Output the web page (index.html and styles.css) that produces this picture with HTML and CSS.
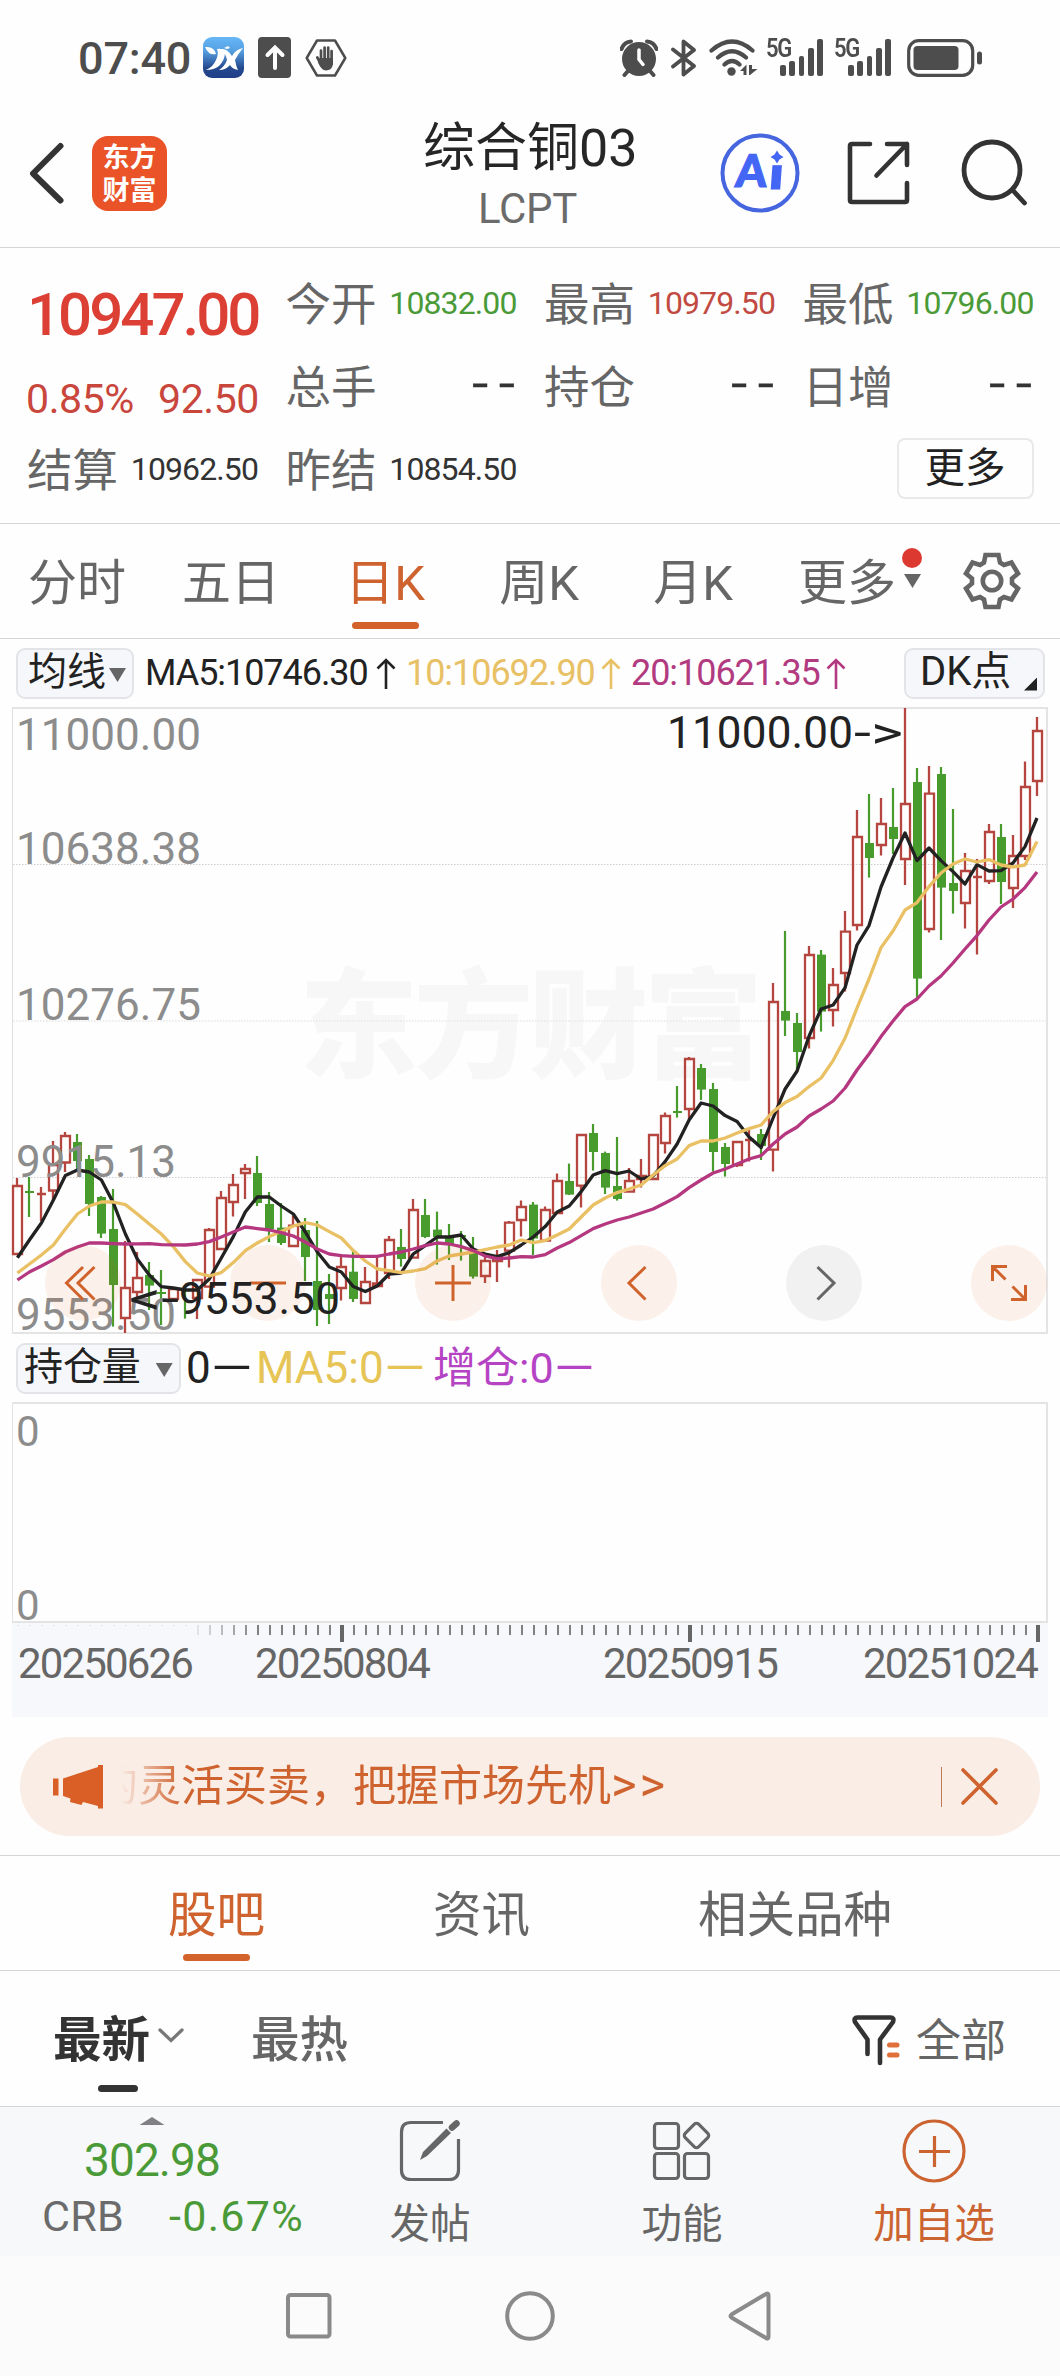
FILE: index.html
```html
<!DOCTYPE html>
<html lang="zh-CN">
<head>
<meta charset="utf-8">
<title>综合铜03 LCPT</title>
<link rel="stylesheet" href="styles.css">
</head>
<body>
<div class="status">
  <span class="clock">07:40</span>
  <svg class="st-app" width="41" height="41" viewBox="0 0 41 41">
    <defs><linearGradient id="sky" x1="0" y1="0" x2="0" y2="1"><stop offset="0" stop-color="#67b7f7"/><stop offset=".35" stop-color="#559fe0"/><stop offset=".75" stop-color="#25498f"/><stop offset="1" stop-color="#203f86"/></linearGradient></defs>
    <rect width="41" height="41" rx="9" fill="url(#sky)"/>
    <path d="M2 10q9-1 11 7q-7 2-11-7zM14 12q5-1 8 3q0 8-6 14q-5 4-13 4q7-3 10-10q3-6 1-11zM18 12q6-1 11 7q4-7 11-8q-5 6-8 12q1 6 3 10q-6-1-8-5q-4 5-11 5q6-4 8-10q-1-6-6-11zM21 11l4-2l2 2l-3 1z" fill="#fff"/>
  </svg>
  <svg class="st-up" width="33" height="41" viewBox="0 0 33 41">
    <rect width="33" height="41" rx="4" fill="#4d4d4d"/>
    <path d="M17 31V11M9.500 18L17 10.500L24.500 18" fill="none" stroke="#fff" stroke-width="4" stroke-linecap="round"/>
  </svg>
  <svg class="st-hand" width="42" height="38" viewBox="0 0 42 38">
    <path d="M12 1.500H30L40.300 19L30 36.500H12L1.700 19z" fill="none" stroke="#4d4d4d" stroke-width="2.500" stroke-linejoin="round"/>
    <path d="M16 25V11.500M19.600 22V8.500M23.200 22V8.500M26.600 25V12M12.300 18.500L17 27" stroke="#4d4d4d" stroke-width="2.700" stroke-linecap="round"/>
    <path d="M14.700 19H28V25q-1 6.500-7 6.500q-4.500 0-8-8z" fill="#4d4d4d"/>
  </svg>
  <div class="status-right">
    <svg width="38" height="38" viewBox="0 0 38 38" class="g-alarm">
      <circle cx="19" cy="20" r="17" fill="#4d4d4d"/>
      <path d="M1.500 10Q4 3 11 2.500M36.500 10Q34 3 27 2.500M8 32L4.500 36M30 32L33.500 36" stroke="#4d4d4d" stroke-width="4" fill="none" stroke-linecap="round"/>
      <path d="M19 11V20.500L23 25.500" stroke="#fff" stroke-width="3.500" fill="none" stroke-linecap="round"/>
    </svg>
    <svg width="26" height="38" viewBox="0 0 26 38" class="g-bt">
      <path d="M2 10.500L23 27L12.500 35.500V2.500L23 11L2 27.500" fill="none" stroke="#4d4d4d" stroke-width="3.800" stroke-linejoin="round" stroke-linecap="round"/>
    </svg>
    <svg width="49" height="38" viewBox="0 0 49 38" class="g-wifi">
      <path d="M2.500 11.500Q23 -6.500 43.500 11.500M9 18.500Q23 6 37 18.500M15.500 25.500Q23 18.500 30.500 25.500" fill="none" stroke="#4d4d4d" stroke-width="4.200" stroke-linecap="round"/>
      <circle cx="22.500" cy="32.500" r="4.200" fill="#4d4d4d"/>
      <path d="M31 32L37.500 25.500V36H34.500V32zM40 26H43V30H48.500L41 36H40z" fill="#4d4d4d"/>
    </svg>
    <div class="sig"><b>5G</b><i class="b1"></i><i class="b2"></i><i class="b3"></i><i class="b4"></i><i class="b5"></i></div>
    <div class="sig"><b>5G</b><i class="b1"></i><i class="b2"></i><i class="b3"></i><i class="b4"></i><i class="b5"></i></div>
    <svg width="76" height="38" viewBox="0 0 76 38" class="g-bat">
      <rect x="1.700" y="1.700" width="64" height="34.600" rx="10" fill="none" stroke="#4d4d4d" stroke-width="3.200"/>
      <rect x="6.500" y="7" width="45" height="24" rx="4" fill="#4d4d4d"/>
      <rect x="70" y="12.500" width="5" height="13" rx="2.500" fill="#4d4d4d"/>
    </svg>
  </div>
</div>

<header class="top">
  <div class="top-left">
    <svg width="36" height="62" viewBox="0 0 36 62"><path d="M31.500 4L4 31.500L31.500 58.500" fill="none" stroke="#333" stroke-width="6" stroke-linecap="round" stroke-linejoin="round"/></svg>
    <div class="logo"><span>东方</span><span>财富</span></div>
  </div>
  <div class="title"><div class="name">综合铜03</div><div class="code">LCPT</div></div>
  <div class="top-right">
    <svg width="80" height="80" viewBox="0 0 80 80">
      <circle cx="40" cy="40" r="37.500" fill="none" stroke="#4666e0" stroke-width="4"/>
      <text class="ai" x="15.500" y="54" textLength="31" lengthAdjust="spacingAndGlyphs" transform="skewX(-4) translate(3 0)">A</text>
      <text class="ai" x="48" y="56.500" textLength="15" lengthAdjust="spacingAndGlyphs" transform="skewX(-4) translate(4 0)">ı</text>
      <path d="M57 17.500L59.500 21.500L63.500 24L59.500 26.500L57 30.500L54.500 26.500L50.500 24L54.500 21.500z" fill="#4466f5"/>
    </svg>
    <svg class="i-share" width="66" height="66" viewBox="0 0 66 66" fill="none" stroke="#333" stroke-width="4.600" stroke-linecap="round" stroke-linejoin="round"><path d="M24 4H6Q4 4 4 6V60Q4 62 6 62H59Q61 62 61 60V43M41 4H61V25M61 4L30.500 35.500"/></svg>
    <svg class="i-search" width="68" height="68" viewBox="0 0 68 68" fill="none" stroke="#333" stroke-width="4.800" stroke-linecap="round"><circle cx="32" cy="31" r="28"/><path d="M53 51.500L64.500 64"/></svg>
  </div>
</header>

<section class="quote">
  <div class="price">10947.00</div>
  <div class="cell"><span>今开</span><em class="dn">10832.00</em></div>
  <div class="cell"><span>最高</span><em class="up">10979.50</em></div>
  <div class="cell"><span>最低</span><em class="dn">10796.00</em></div>
  <div class="change"><span>0.85%</span><span>92.50</span></div>
  <div class="cell"><span>总手</span><em class="none">--</em></div>
  <div class="cell"><span>持仓</span><em class="none">--</em></div>
  <div class="cell"><span>日增</span><em class="none">--</em></div>
  <div class="cell"><span>结算</span><em>10962.50</em></div>
  <div class="cell"><span>昨结</span><em>10854.50</em></div>
  <div class="more"><button>更多</button></div>
</section>

<nav class="periods">
  <a>分时</a><a>五日</a><a class="on">日K</a><a>周K</a><a>月K</a><a class="morep">更多<i class="dot"></i><i class="tri"></i></a>
  <svg width="60" height="60" viewBox="-30 -30 60 60" fill="none" stroke="#666" stroke-width="4.600">
    <circle r="9.200"/>
    <path d="M-6.500 -26H6.500L8 -18.500L12 -16L19.500 -18.500L26 -7.500L20 -2.500V2.500L26 7.500L19.500 18.500L12 16L8 18.500L6.500 26H-6.500L-8 18.500L-12 16L-19.500 18.500L-26 7.500L-20 2.500V-2.500L-26 -7.500L-19.500 -18.500L-12 -16L-8 -18.500z"/>
  </svg>
</nav>

<div class="ma">
  <button class="pill pill-ma">均线<i class="tri"></i></button>
  <span class="m5">MA5:10746.30</span><svg class="arr m5"><use href="#arrow"/></svg>
  <span class="m10">10:10692.90</span><svg class="arr m10"><use href="#arrow"/></svg>
  <span class="m20">20:10621.35</span><svg class="arr m20"><use href="#arrow"/></svg>
  <button class="pill pill-dk">DK点<i class="corner"></i></button>
  <svg width="0" height="0" class="defs"><symbol id="arrow" viewBox="0 0 20 31"><path d="M10 31V1.500M1.500 10.500L10 2L18.500 10.500" fill="none" stroke="currentColor" stroke-width="2.600"/></symbol></svg>
</div>

<svg id="kline" class="kline" width="1060" height="628" viewBox="0 707 1060 628">
  <text class="wm" x="299" y="1069" textLength="464">东方财富</text>
  <g id="grid"></g>
  <g id="candles"></g>
  <g id="lines" fill="none" stroke-width="3.300" stroke-linejoin="round"></g>
  <g class="axis">
    <text x="16" y="750" textLength="185">11000.00</text>
    <text x="16" y="864" textLength="185">10638.38</text>
    <text x="16" y="1020" textLength="185">10276.75</text>
    <text x="16" y="1177" textLength="160">9915.13</text>
    <text x="16" y="1329.500" textLength="160">9553.50</text>
  </g>
  <g class="btns" fill="none" stroke="#d0622c" stroke-width="3">
    <g fill="#dc5f22" fill-opacity=".09" stroke="none"><circle cx="83" cy="1283" r="38"/><circle cx="268" cy="1283" r="38"/><circle cx="453" cy="1283" r="38"/><circle cx="639" cy="1283" r="38"/><circle cx="1009" cy="1283" r="38"/></g>
    <circle cx="824" cy="1283" r="38" fill="#000" fill-opacity=".05" stroke="none"/>
    <path d="M83 1267L66.500 1283L83 1299.500M94.500 1267L78 1283L94.500 1299.500M250 1283H286M435 1283H471M453 1265V1301M645.500 1267L629 1283L645.500 1299.500"/>
    <path d="M817.500 1267L834 1283L817.500 1299.500" stroke="#666"/>
    <path d="M1007 1266.500H992.500V1281M993 1267L1005.500 1279.500M1011 1299.500H1025.500V1285M1025 1299L1012.500 1286.500"/>
  </g>
  <g class="note">
    <text x="667" y="748" textLength="186">11000.00</text>
    <text x="854" y="748" textLength="49" lengthAdjust="spacingAndGlyphs">-&gt;</text>
    <text x="129" y="1313.500" textLength="50" lengthAdjust="spacingAndGlyphs">&lt;-</text>
    <text x="179" y="1313.500" textLength="161">9553.50</text>
  </g>
</svg>

<div class="volhead">
  <button class="pill pill-vol">持仓量<i class="tri"></i></button>
  <span class="v0">0<i>—</i></span><span class="v1">MA5:0<i>—</i></span><span class="v2">增仓:0<i>—</i></span>
</div>
<div class="volbox"><span>0</span><span>0</span></div>
<div class="dates">
  <svg id="ticks" width="1036" height="20" viewBox="12 1622 1036 20"></svg>
  <div class="dates-row"><span>20250626</span><span>20250804</span><span>20250915</span><span>20251024</span></div>
</div>

<div class="banner">
  <svg width="52" height="46" viewBox="0 0 52 46"><path d="M0 14.500H5.500V31.500H0zM10 14.500L45 3V1H50V44.500H45V42L30 38L28.500 41L17 38L17.500 34.500L10 32z" fill="#d95f26"/></svg>
  <div class="marquee"><span>的灵活买卖，把握市场先机<i>&gt;&gt;</i></span></div>
  <div class="banner-end"><svg width="37" height="37" viewBox="0 0 37 37"><path d="M2 2L35 35M35 2L2 35" stroke="#cf632f" stroke-width="3.600" stroke-linecap="round"/></svg></div>
</div>

<nav class="tabs"><a class="on">股吧</a><a>资讯</a><a>相关品种</a></nav>

<div class="sort">
  <a class="on">最新<svg width="26" height="16" viewBox="0 0 26 16"><path d="M2 2L13 12.500L24 2" fill="none" stroke="#777" stroke-width="3.300" stroke-linecap="round"/></svg></a>
  <a>最热</a>
  <div class="filter">
    <svg width="48" height="52" viewBox="0 0 48 52" fill="none" stroke="#333" stroke-width="4.600" stroke-linecap="round" stroke-linejoin="round"><path d="M15.500 40V25.500L3 8Q1.500 3.500 5.500 3.500H38.500Q42.500 3.500 41 8L28 25.500V49"/><path d="M37.500 31H45M37.500 41H45" stroke="#e0703a" stroke-width="5"/></svg>
    <span>全部</span>
  </div>
</div>

<footer class="bar">
  <div class="index"><i class="uptri"></i><b>302.98</b><p><span>CRB</span><em>-0.67%</em></p></div>
  <a><svg width="62" height="62" viewBox="0 0 62 62" fill="none" stroke="#666" stroke-width="3.200"><path d="M44 2.500H12Q2.500 2.500 2.500 12V50Q2.500 59.500 12 59.500H50Q59.500 59.500 59.500 50V19"/><path d="M21 40L24 32L47.500 8.500L52 13L28 36z" fill="#666" stroke="none"/><path d="M53 7.500L57.500 3.500" stroke-width="6.500" stroke-linecap="round"/></svg>发帖</a>
  <a><svg width="62" height="62" viewBox="0 0 62 62" fill="none" stroke="#666" stroke-width="3.200"><rect x="3.500" y="3.500" width="24" height="25" rx="3"/><rect x="3.500" y="33.500" width="24" height="25" rx="3"/><rect x="33.500" y="33.500" width="24" height="25" rx="3"/><rect x="36" y="6" width="19" height="19" rx="3" transform="rotate(45 45.500 15.500)"/></svg>功能</a>
  <a class="add"><svg width="64" height="64" viewBox="0 0 64 64" fill="none" stroke="#cb6431" stroke-width="3.200"><circle cx="32" cy="32" r="30"/><path d="M17 32.500H48M32.500 17V48"/></svg>加自选</a>
</footer>
<div class="sysnav">
  <svg width="46" height="46" viewBox="0 0 46 46"><rect x="2" y="2" width="41.500" height="41.500" rx="2.500"/></svg>
  <svg width="50" height="50" viewBox="0 0 50 50"><circle cx="25" cy="25" r="22.800"/></svg>
  <svg width="44" height="50" viewBox="0 0 44 50"><path d="M40.500 4V46Q40.500 48.500 38 47L3.500 26.500Q1.500 25 3.500 23.500L38 3Q40.500 1.500 40.500 4z"/></svg>
</div>
<script src="chart.js"></script>
</body>
</html>
```

FILE: styles.css
```css
* { box-sizing: border-box; }
body { margin: 0; width: 1060px; background: #fefefe; color: #333; font-family: Roboto, "Noto Sans CJK SC", sans-serif; overflow-x: hidden; }
svg { display: block; flex: none; }
em, i { font-style: normal; }
p { margin: 0; }
button { font-family: inherit; padding: 0; margin: 0; color: #222; }

.status { height: 99px; padding: 16px 77px 0 78px; display: flex; align-items: center; color: #4d4d4d; }
.clock { font-size: 45px; font-weight: 500; width: 113px; margin-top: 1px; white-space: nowrap; letter-spacing: -.2px; }
.st-app { margin-left: 12px; }
.st-up { margin-left: 14px; }
.st-hand { margin-left: 14px; }
.status-right { margin-left: auto; display: flex; align-items: center; }
.g-bt { margin-left: 13px; }
.g-wifi { margin-left: 12px; margin-right: 9px; }
.sig { width: 56px; height: 37px; margin-right: 12px; display: flex; align-items: flex-end; gap: 3.400px; position: relative; padding-left: 13px; }
.sig b { position: absolute; left: -1px; top: -2px; font-size: 25px; line-height: 24px; font-weight: 600; letter-spacing: -1.500px; transform: scaleX(.88); transform-origin: 0 0; }
.sig i { width: 6px; border-radius: 2px; background: #4d4d4d; }
.sig .b1 { height: 11px; } .sig .b2 { height: 15px; } .sig .b3 { height: 20px; } .sig .b4 { height: 28px; } .sig .b5 { height: 37px; }
.g-bat { margin-left: 4px; }

.top { height: 149px; border-bottom: 1px solid #d6d6d6; display: grid; grid-template-columns: 1fr 214px 1fr; align-items: center; }
.top-left { display: flex; align-items: center; padding-left: 29px; gap: 27px; }
.logo { width: 75px; height: 75px; border-radius: 16px; background: #e95327; color: #fff; font-size: 27px; font-weight: 700; line-height: 33px; padding-top: 6px; display: flex; flex-direction: column; align-items: center; }
.title { text-align: center; white-space: nowrap; color: #262626; }
.name { font-size: 52px; line-height: 64px; margin-top: 10px; }
.code { font-size: 42px; line-height: 60px; margin-top: -2px; margin-left: -5px; color: #6b6b6b; letter-spacing: -.3px; }
.top-right { display: flex; align-items: center; padding-left: 83px; }
.ai { font: 900 45px Lato, sans-serif; fill: #4466f5; stroke: #4466f5; stroke-width: 1.200px; }
.i-share { margin-left: 46px; }
.i-search { margin-left: 48px; }

.quote { height: 276px; border-bottom: 1px solid #d6d6d6; padding: 13px 0 0 27px; display: grid; grid-template-columns: repeat(4, 231px); grid-template-rows: repeat(3, 83px); column-gap: 27.500px; align-items: center; }
.cell { display: flex; justify-content: space-between; align-items: center; white-space: nowrap; }
.cell span { font-size: 45.500px; color: #666; margin-top: -3px; }
.cell em { font-size: 32px; letter-spacing: -.9px; color: #333; }
.cell .up { color: #c14b42; }
.cell .dn { color: #4b9a38; }
.cell .none { font: 42px/50px "Liberation Mono", monospace; letter-spacing: -3px; margin: 0 -2px 0 0; -webkit-text-stroke: .4px #333; transform: scaleX(1.2); transform-origin: 100% 50%; }
.price { font-size: 60px; font-weight: 500; color: #dc4035; letter-spacing: -3px; white-space: nowrap; padding: 24px 0 0; }
.change { font-size: 41px; letter-spacing: -.4px; color: #c9463d; display: flex; justify-content: space-between; padding-top: 26px; margin: 0 -1px; }
.more { grid-column: 4; }
.more button { display: block; margin: -1px 0 0 94px; width: 137px; height: 61px; border: 2px solid #e8e9eb; border-radius: 8px; background: #fefefe; font-size: 40.500px; line-height: 53px; }

.periods { height: 115px; border-bottom: 1px solid #d6d6d6; display: flex; align-items: center; color: #666; }
.periods a { width: 154px; height: 114px; line-height: 119px; text-align: center; font-size: 49px; position: relative; }
.periods a.on { color: #cf632f; }
.periods .on::after, .tabs .on::after { content: ""; position: absolute; width: 67px; height: 7px; border-radius: 4px; background: #d4622b; left: 50%; margin-left: -33px; bottom: 9px; }
.periods svg { margin-left: 38px; margin-top: 0; }
.dot { position: absolute; width: 20px; height: 20px; border-radius: 50%; background: #dc3a31; left: 132px; top: 24px; }
.tri { width: 17px; height: 14px; background: #666; clip-path: polygon(0 0, 100% 0, 50% 100%); }
.morep .tri { position: absolute; left: 134px; top: 50px; }

.ma { height: 68px; display: flex; align-items: center; font-size: 36px; white-space: nowrap; padding: 0 15px 0 16px; }
.ma span { letter-spacing: -1.050px; }
.defs { position: absolute; }
.m5 { color: #222; } .m10 { color: #e8c065; } .m20 { color: #b23a80; }
span.m5 { margin-left: 11px; width: 231px; }
span.m10, span.m20 { width: 195px; margin-left: 10px; }
.arr { width: 20px; height: 31px; }
.pill { flex: none; height: 51px; border: 2px solid #e2e4e8; border-radius: 9px; background: #f6f7fa; display: flex; align-items: center; font-size: 39px; line-height: 44px; white-space: nowrap; }
.pill-ma { width: 118px; padding: 0 0 2px 10px; gap: 3px; }
.pill-ma .tri { margin-top: 6px; }
.pill-dk { width: 141px; margin-left: auto; padding: 0 0 2px 14px; position: relative; font-size: 40px; }
.corner { position: absolute; right: 6px; bottom: 6px; width: 13px; height: 13px; background: #222; clip-path: polygon(100% 0, 100% 100%, 0 100%); }

.wm { font: 900 119px "Noto Sans CJK SC", sans-serif; fill: #f7f7f7; }
.axis text { font-size: 44px; fill: #8c8c8c; }
.note text { font-size: 44px; fill: #222; }

.volhead { height: 67px; display: flex; align-items: center; font-size: 44px; line-height: 60px; padding-left: 16px; white-space: nowrap; }
.volhead span i { display: inline-block; transform: scaleX(1.2); transform-origin: 0 50%; }
.volhead span { height: 60px; margin-top: -2px; }
.pill-vol { width: 165px; padding: 0 0 3px 6px; gap: 15px; letter-spacing: -.1px; }
.pill-vol .tri { margin-top: 6px; }
.volhead .v0 { color: #222; margin-left: 5px; width: 70px; }
.v1 { color: #e6c456; width: 177px; }
.volhead .v2 { color: #b544c4; font-size: 43px; }
.volbox { height: 221px; margin: 0 12px; border: 2px solid #e4e4e4; border-left-width: 1px; display: flex; flex-direction: column; justify-content: space-between; padding: 7px 3px 0; font-size: 42px; line-height: 42px; color: #8c8c8c; }
.volbox span:last-child { margin-bottom: -6px; }
.dates { height: 94px; margin: 0 12px; background: #f7f8fb; }
.dates-row { display: flex; color: #666; font-size: 42px; letter-spacing: -1.850px; line-height: 42px; padding: 0 0 0 6px; }
.dates-row span { width: 237px; }
.dates-row span:nth-child(2) { width: 348px; }
.dates-row span:nth-child(3) { width: 260px; }
.dates-row span:nth-child(4) { width: 176px; }

.banner { height: 99px; margin: 20px 20px 0; border-radius: 50px; background: #faede5; display: flex; align-items: center; padding: 0 42px 0 33px; color: #cf632f; }
.marquee { margin-left: 16px; width: 700px; height: 60px; overflow: hidden; line-height: 58px; font-size: 43px; white-space: nowrap; -webkit-mask: linear-gradient(90deg, transparent, #000 60px); mask: linear-gradient(90deg, transparent, #000 60px); }
.marquee span { margin-left: -26px; }
.marquee i { letter-spacing: 3px; font-size: 49px; line-height: 40px; }
.banner-end { margin-left: auto; border-left: 1px solid #c07a58; height: 40px; padding-left: 19px; display: flex; align-items: center; }

.tabs { margin-top: 19px; height: 116px; border: solid #d6d6d6; border-width: 1px 0; display: flex; justify-content: space-evenly; font-size: 48.500px; line-height: 120px; color: #666; }
.tabs a { position: relative; height: 114px; }
.tabs .on { color: #cf632f; }

.sort { height: 135px; display: flex; align-items: center; padding: 2px 54px 0 54px; font-size: 48.500px; font-weight: 500; color: #666; }
.sort a { position: relative; display: flex; align-items: center; margin: -7px 0 0 -1px; }
.sort a + a { margin-left: 67px; }
.sort .on { color: #333; font-weight: 700; }
.sort .on svg { margin-left: 8px; }
.sort .on::after { content: ""; position: absolute; left: 45px; bottom: -21px; width: 40px; height: 7px; border-radius: 4px; background: #333; }
.filter { margin-left: auto; display: flex; align-items: center; font-size: 45px; font-weight: 400; gap: 16px; }
.filter span { margin-top: -4px; }

.bar { height: 150px; border-top: 1px solid #d2d5da; background: #f7f8fa; display: grid; grid-template-columns: 304px repeat(3, 252px); }
.bar a { display: flex; flex-direction: column; align-items: center; padding-top: 12px; font-size: 40.500px; line-height: 50px; color: #666; }
.bar a svg { height: 64px; margin-bottom: 16px; }
.bar .add { color: #cb6431; }
.index { display: flex; flex-direction: column; align-items: center; }
.uptri { margin-top: 10px; width: 25px; height: 8px; background: #808084; clip-path: polygon(50% 0, 100% 100%, 0 100%); }
.index b { font-weight: 400; font-size: 46px; line-height: 46px; color: #4b9a38; margin-top: 12px; letter-spacing: -.9px; }
.index p { display: flex; width: 304px; padding: 0 0 0 42px; margin-top: 10px; line-height: 46px; }
.index p span { font-size: 43px; color: #6b6b6b; width: 127px; letter-spacing: .3px; }
.index em { font-size: 43px; color: #4b9a38; letter-spacing: 1.300px; }
.sysnav { height: 120px; background: #fbfbfb; display: flex; align-items: center; justify-content: space-between; padding: 0 288px 0 286px; }
.sysnav svg { fill: none; stroke: #8a8a8a; stroke-width: 4; }
```

FILE: chart.js
```js
// Daily candles: colour flag, high, body top, body bottom, low (chart y coordinates).
var K = `R 1178 1186 1254 1254|G 1177 1191 1192 1217|R 1187 1194 1194 1221|R 1141 1165 1190.5 1201|R 1132 1136 1162.5 1172
G 1134 1142 1161 1169|G 1155 1159 1204 1216|G 1196 1197 1233.6 1238|G 1189 1229 1285 1326.6|R 1241 1288 1318 1333
R 1252 1278 1292 1297|G 1262 1275 1285.6 1310|G 1270 1292 1294 1325|R 1287 1289 1299 1300|G 1285 1289 1291 1318.6
R 1279 1280 1298 1319|R 1228 1230 1286.7 1287|R 1191 1198 1249 1250|R 1174 1185 1202 1216.6|R 1164 1169 1173 1199
G 1156 1173 1203 1206|G 1192 1204 1229 1242|G 1203 1227.6 1243 1245|R 1215.6 1225.6 1246 1246|G 1218 1230 1257 1281
G 1221 1281 1310 1326|G 1274 1294 1299 1324|R 1254 1267 1288 1300.6|G 1250 1271.7 1299 1302|R 1267 1282 1303 1303
R 1255 1283.5 1286 1286|R 1236 1240 1273 1279|G 1229 1247 1259 1266.6|R 1199 1210 1257.7 1258|G 1199 1215 1237 1238
G 1211.6 1229.6 1237 1264.6|G 1224 1236.7 1244 1260|G 1231 1235 1237 1260.6|G 1237 1251 1276.6 1278.6|R 1254 1261 1276 1283
R 1250 1256.6 1261 1282|R 1221 1222.6 1250.6 1267.6|R 1200.6 1207 1220 1236.6|G 1202 1204.6 1238.6 1255|R 1206.6 1210 1240.6 1241
R 1173.6 1181 1213 1213|G 1163.6 1181 1194.6 1195|R 1134.6 1135 1185.6 1207.6|G 1124 1133 1152 1170.6|G 1151.6 1153 1187.6 1194
G 1137 1186 1199 1200.6|R 1168 1181 1191.6 1192|R 1159 1176 1179 1187.6|R 1134 1135 1179 1179|R 1112.6 1116 1143 1153.6
G 1086 1111 1112.6 1117.6|R 1057 1059 1109 1119|G 1064 1068 1089.6 1100|G 1083 1089 1152 1171.6|G 1143 1147 1164 1176.6
R 1141 1142 1165 1167|R 1130 1140 1140 1161.6|G 1129 1134 1146 1160|R 983 1002 1149.6 1171.6|G 931 1011 1020.6 1036
G 1013 1023 1052 1070|R 946 955 1038 1048.6|G 950 954.6 1011.6 1031.6|R 968 985 1010 1026.6|R 911 931.6 973 991.6
R 810 837 925 930.6|G 794 843 858 877.6|R 798 824 845 855.6|G 788 827 839 854|R 708 804 859 885
G 768 782 978.6 998|R 766 793.6 929 932.6|G 767 774 887.6 940|G 809 883 891 913.6|R 853 871 903 928.6
R 859 877 877 954.6|R 824 832 881 884|G 824 837 882 904|R 835 856 888 908|R 761.6 787 856 860|R 717 731 781 796`.split(/[|\n]/);

var MA = {
  '#222222': [1257.7,1240,1223,1200,1175.6,1170,1172,1180,1203,1234,1259,1275,1286.6,1288,1290,1290,1279,1258,1236.6,1212,1197,1197,1206,1214,1232,1252,1267,1272,1286.6,1291.6,1286,1274,1273,1254,1245.6,1237,1237,1235,1249,1254,1256.6,1252.6,1245,1237,1226.6,1212,1206,1191.6,1175,1170.6,1173.6,1171,1179,1176,1161.6,1144,1120,1103,1106,1115.6,1121.6,1137,1147.6,1118,1089,1071,1036,1009,1005,987.6,945,925.6,887,858,833,860.6,848,860.6,871.6,884,864.6,871,870.6,863,846.6,818],
  '#e9c063': [1273,1264,1255,1245,1229,1214,1206,1202,1202,1204.6,1214,1224,1234,1246.6,1261.6,1273,1276,1272.6,1262.6,1250.6,1243,1236.6,1231.6,1226,1222.6,1225,1231.6,1238,1250.6,1261,1269,1270.6,1272.6,1271,1268.6,1261,1256,1254,1252,1249.6,1247,1245,1240,1242.6,1240.6,1235,1229,1217,1205,1198,1192.6,1189,1185,1175,1165.6,1159,1145.6,1141,1141,1138,1133,1128.6,1125,1111.6,1102.6,1096.6,1086.6,1078,1060.6,1038,1008,979,947.6,931,910,902.6,886.6,873,864,859,862,859.6,865,867,865,841.6],
  '#b5377f': [1280,1272,1266,1259.6,1252,1247,1243,1243,1243.6,1244,1243.8,1243.6,1244.6,1244.8,1245,1244,1241.6,1237,1232,1227,1228.6,1230,1232.6,1236,1242,1249,1254,1255.6,1256.3,1256.3,1256.3,1254,1252,1249,1245.6,1243,1244,1246.6,1250.6,1256,1258.6,1258,1256.6,1257,1254.6,1248,1242.6,1235.6,1228.6,1224,1220,1217,1213,1209,1203,1196.6,1187.6,1180,1173,1169,1164,1159,1155.6,1144,1134,1127,1116,1109,1101,1088,1070,1054,1036.6,1021,1006.6,999,986,976,963,949,935.6,920,907,899,887.6,872]
};

function px(i) { return 17.4 + i * 11.995; }

var out = '';
K.forEach(function (row, i) {
  var p = row.trim().split(' '), v = p.slice(1).map(Number);
  var c = Math.round(px(i));
  var hi = v[0], top = v[1], bot = v[2], lo = v[3];
  if (p[0] === 'G') {
    out += '<path d="M' + c + ' ' + hi + 'V' + lo + '" stroke="#489c2e" stroke-width="2.2"/>' +
      '<rect x="' + (c - 4) + '" y="' + top + '" width="9" height="' + Math.max(2, bot - top) + '" fill="#489c2e"/>';
  } else {
    out += '<path d="M' + c + ' ' + hi + 'V' + top + 'M' + c + ' ' + bot + 'V' + lo +
      'M' + (c - 4) + ' ' + top + 'H' + (c + 5) + 'V' + bot + 'H' + (c - 4) + 'Z" stroke="#b5463f" stroke-width="2.3" fill="none"/>';
  }
});
document.getElementById('candles').innerHTML = out;

out = '';
Object.keys(MA).forEach(function (color) {
  out += '<polyline stroke="' + color + '" points="' + MA[color].map(function (y, i) { return px(i).toFixed(1) + ',' + y; }).join(' ') + '"/>';
});
document.getElementById('lines').innerHTML = out;

document.getElementById('grid').innerHTML =
  '<path d="M12.500 708V1333" stroke="#e0e0e0"/>' +
  '<path d="M12 708H1047V1333H12" fill="none" stroke="#e4e4e4" stroke-width="2"/>' +
  '<path d="M13 864.5H1046M13 1177.5H1046" stroke="#cfcfcf" stroke-dasharray="1.500 1.500"/>' +
  '<path d="M13 1021H1046" stroke="#ececec" stroke-width="2" stroke-dasharray="1.500 1.500"/>';

// Day ticks fade in from the left; the dated days get a taller mark.
out = '';
for (var i = 0; i < 86; i++) {
  var major = i === 27 || i === 56 || i === 85;
  var x = Math.round(px(i)) + 1;
  var fade = Math.min(1, Math.max(0.15, (i - 14) / 6));
  out += '<path d="M' + x + ' 1624V' + (i < 15 ? 1625 : major ? 1641 : 1634) + '" stroke="' + (major ? '#666' : '#808080') +
    '" stroke-width="' + (major ? 4 : 2) + '" opacity="' + fade + '"/>';
}
document.getElementById('ticks').innerHTML = out;
```
